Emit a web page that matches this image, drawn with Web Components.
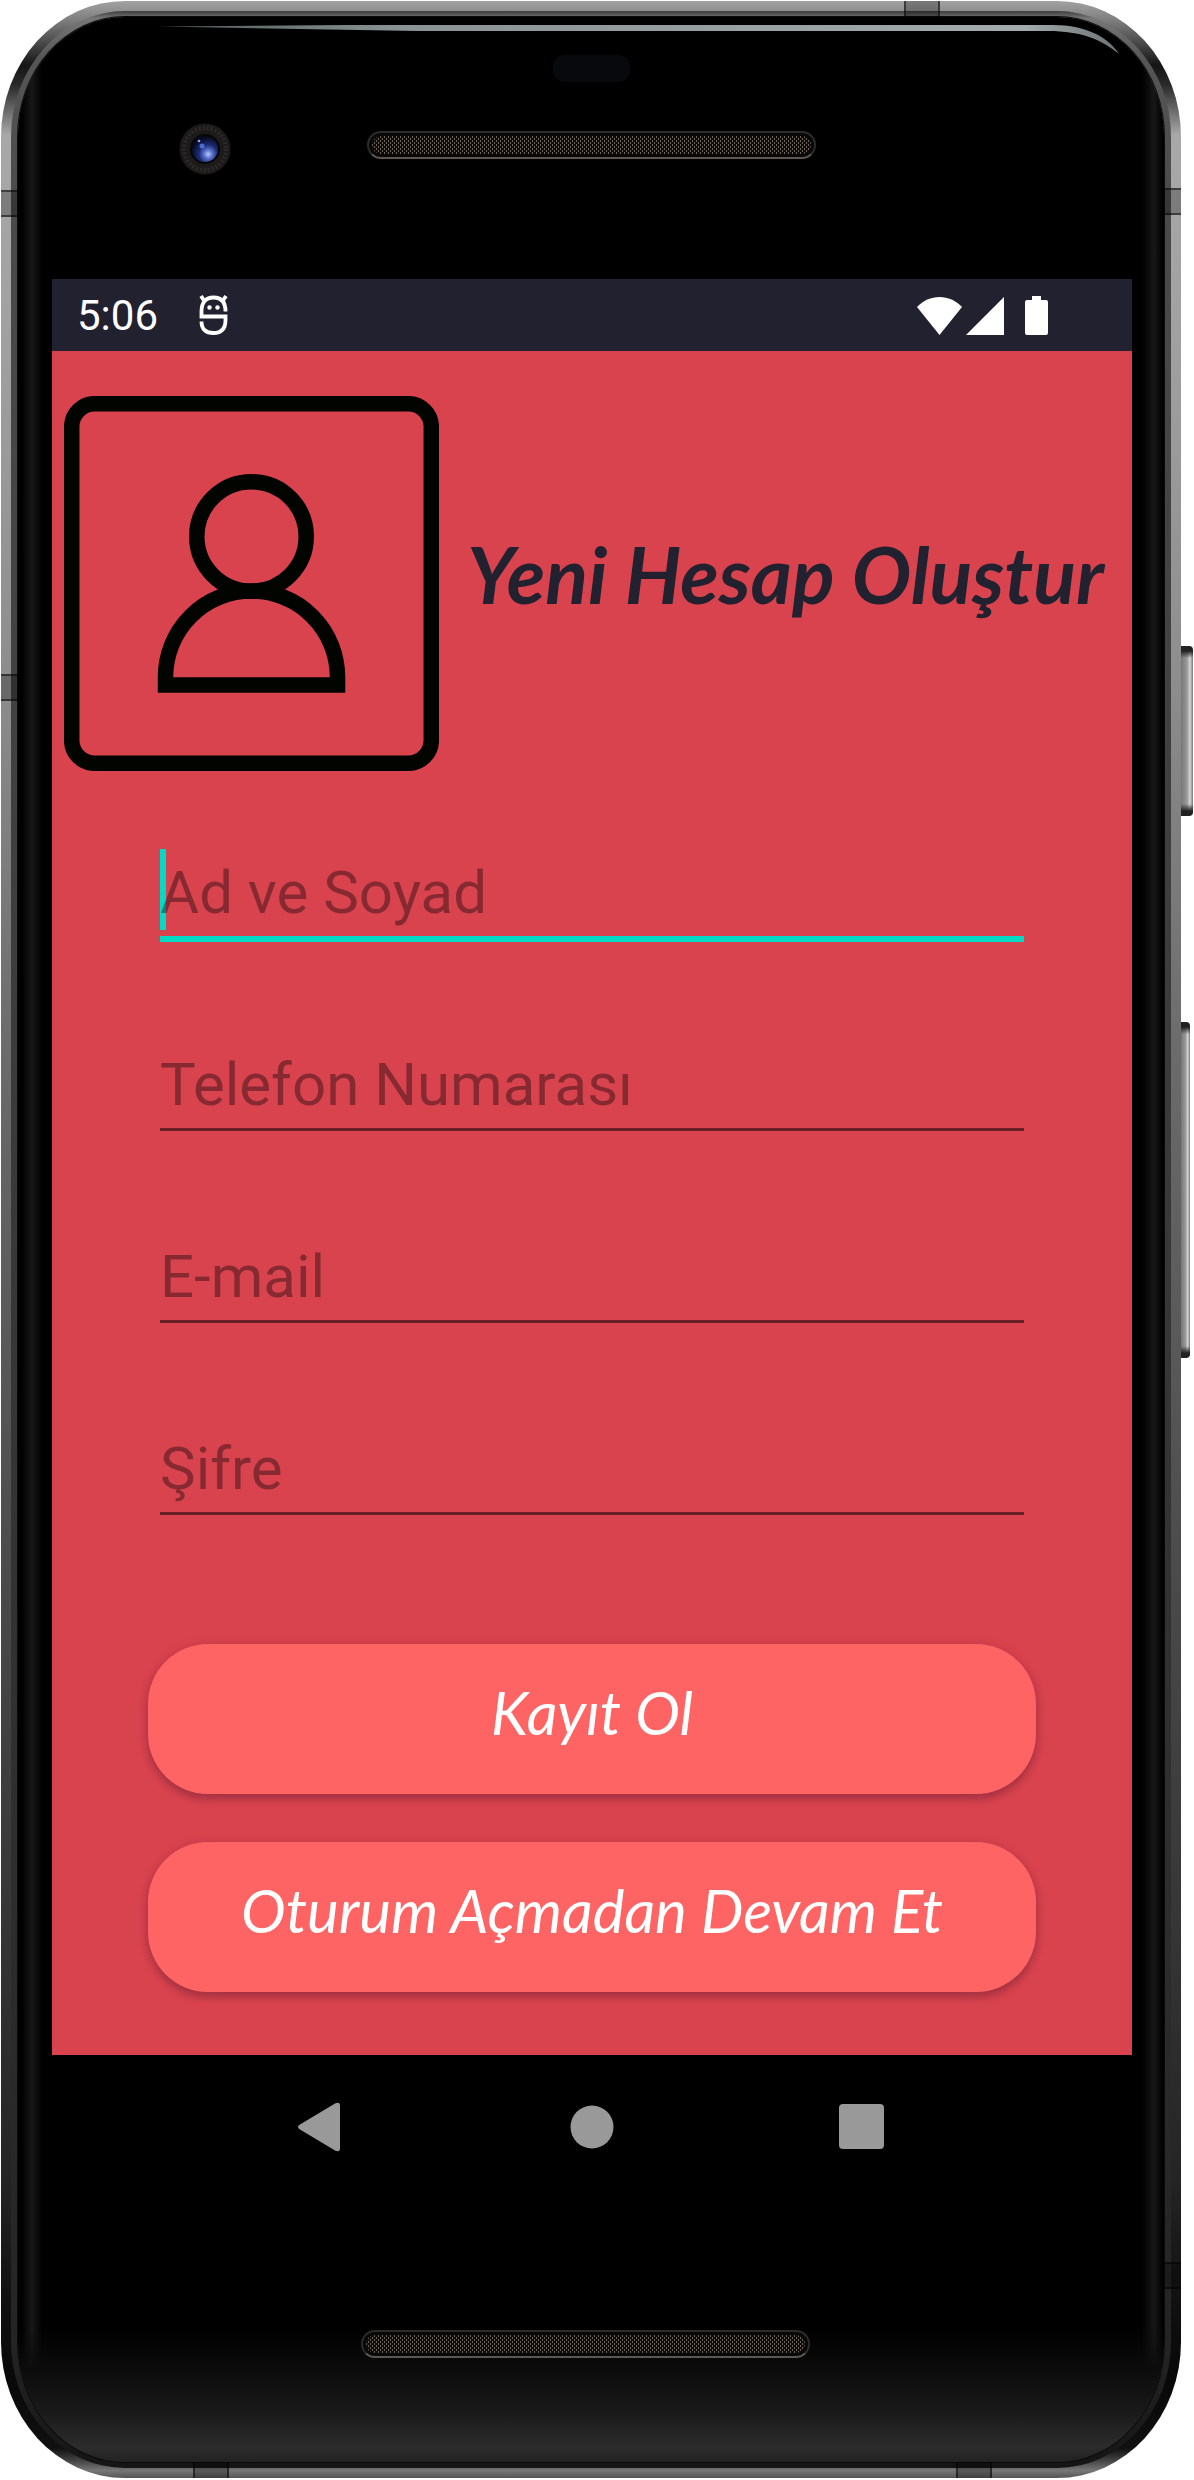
<!DOCTYPE html>
<html lang="tr">
<head>
<meta charset="utf-8">
<meta name="viewport" content="width=device-width, initial-scale=1">
<title>Yeni Hesap Oluştur</title>
<style>
  body { margin: 0; background: #fff; font-family: Roboto, sans-serif; }
</style>
</head>
<body>
<device-frame>
  <status-bar time="5:06"></status-bar>
  <sign-up-page heading="Yeni Hesap Oluştur">
    <text-field name="fullname" label="Ad ve Soyad" active></text-field>
    <text-field name="phone" type="tel" label="Telefon Numarası"></text-field>
    <text-field name="email" type="email" label="E-mail"></text-field>
    <text-field name="password" type="password" label="Şifre"></text-field>
    <pill-button slot="actions">Kayıt Ol</pill-button>
    <pill-button slot="actions">Oturum Açmadan Devam Et</pill-button>
  </sign-up-page>
  <nav-bar></nav-bar>
</device-frame>

<script>
const define = (name, render) => customElements.define(name, class extends HTMLElement {
  connectedCallback() {
    if (this.shadowRoot) return;
    this.attachShadow({ mode: 'open' }).innerHTML = render(this);
  }
});

define('speaker-grille', () => `
  <style>
    :host { display: block; box-sizing: border-box; width: 449px; height: 28px; border-radius: 14px;
      border: 2px solid #2b2b2b; border-bottom-color: #5c5752; padding: 3px; background: #080808; }
    svg { display: block; width: 100%; height: 100%; border-radius: 9px; }
  </style>
  <svg aria-hidden="true">
    <defs><pattern id="mesh" width="4" height="4" patternUnits="userSpaceOnUse">
      <rect width="4" height="4" fill="#0d0c0b"/>
      <path d="M0 0h1v2H0zM2 2h1v2H2z" fill="#6b655c"/>
    </pattern></defs>
    <rect width="100%" height="100%" fill="url(#mesh)"/>
  </svg>`);

define('front-camera', () => `
  <style>:host { display: block; width: 52px; height: 52px; } svg { display: block; }</style>
  <svg width="52" height="52" viewBox="0 0 52 52" aria-hidden="true">
    <defs>
      <radialGradient id="lens" cx="62%" cy="70%" r="65%">
        <stop offset="0" stop-color="#b9c8f8"/><stop offset=".25" stop-color="#5a74cc"/>
        <stop offset=".55" stop-color="#1c2c74"/><stop offset="1" stop-color="#060a20"/>
      </radialGradient>
    </defs>
    <circle cx="26" cy="26" r="25.5" fill="#1d1a1a"/>
    <circle cx="26" cy="26" r="21" fill="none" stroke="#2c2929" stroke-width="4" stroke-dasharray="2 2"/>
    <circle cx="26" cy="26" r="15" fill="#060608"/>
    <circle cx="26" cy="26" r="13" fill="url(#lens)"/>
    <circle cx="23" cy="23" r="2.5" fill="#4d6bd0"/>
    <circle cx="20" cy="18" r="1.3" fill="#93a8ee"/>
  </svg>`);

define('device-frame', () => `
  <style>
    :host { display: block; position: relative; padding: 1px 13px 1px 1px; }
    .rim { position: relative; padding: 10px; border-radius: 124px / 136px; overflow: hidden;
      background: linear-gradient(#a2a2a2 0, #7d7d7d .8%, #151515 2.6%, #2a2a2a 3.4%, #a8a8a8 5.4%, #a0a0a0 14%,
        #8c8c8c 28%, #6c6c6c 42%, #505050 60%, #353535 78%, #242424 88%, #101010 93%, #080808 96%, #101010 98.8%, #444 99.3%, #777 99.7%, #555 100%); }
    .lip { padding: 6px 7px; border-radius: 114px / 126px;
      background: linear-gradient(#3d3d3d, #777 .3%, #555 2%, #4a4a4a 8%, #3c3c3c 40%, #2c2c2c 80%, #242424 95%, #151515); }
    .glass { position: relative; border-radius: 107px / 120px; overflow: hidden; box-shadow: 0 0 0 1px #0a0a0a;
      background:
        linear-gradient(transparent 94.5%, #0c0c0c 96.3%, #1a1a1a 98%, #2c2c2c 99.4%, #222 100%),
        linear-gradient(90deg, #000 4px, #171717 14px, #000 24px, #000 calc(100% - 22px), #171717 calc(100% - 10px), #000 calc(100% - 1px)); }
    .gleam { position: absolute; left: 0; top: 0; width: 100%; height: 60px; }
    .top { height: 262px; display: flex; flex-direction: column; align-items: center; }
    .sensor { width: 77px; height: 27px; border-radius: 12px; background: #08090d; margin: 38px 0 41px; }
    .row { width: 100%; display: grid; grid-template-columns: 1fr auto 1fr; align-items: center; }
    .row speaker-grille { margin-bottom: 8px; }
    front-camera { justify-self: center; padding-left: 26px; }
    .screen { margin: 0 32px 0 34px; }
    .bottom { height: 263px; box-sizing: border-box; display: flex; justify-content: center; padding: 131px 12px 0 0; }
    .band { position: absolute; background: rgb(0 0 0 / .25); border: 0 solid rgb(0 0 0 / .5); }
    .side { width: 17px; height: 23px; border-width: 2px 0; }
    .cap { width: 32px; height: 16px; border-width: 0 2px; }
    .l { left: 0 } .r { right: 0 } .t { top: 0 } .b { bottom: 0 }
    .key { position: absolute; right: 1px; width: 12px; border-radius: 0 4px 4px 0;
      background: linear-gradient(#222 0, #222 5px, transparent 12px, transparent calc(100% - 12px), #222 calc(100% - 5px)),
        linear-gradient(90deg, #777, #999 50%, #d5d8d6 75%, #777); }
    .power { top: 646px; height: 170px; }
    .volume { top: 1022px; height: 336px; right: 4px; width: 9px; }
  </style>
  <i class="key power"></i><i class="key volume"></i>
  <div class="rim">
    <div class="lip"><div class="glass">
      <svg class="gleam" viewBox="0 0 1146 60" preserveAspectRatio="none" aria-hidden="true">
        <defs><linearGradient id="g"><stop offset="0" stop-color="#4e5656"/><stop offset=".25" stop-color="#8a9394"/><stop offset=".9" stop-color="#a3abad"/><stop offset="1" stop-color="#6c7374"/></linearGradient></defs>
        <path d="M140 9.500L330 8H1035C1069 8 1091 21 1101 37C1084 23 1064 14 1030 14H400Z" fill="url(#g)"/>
      </svg>
      <div class="top">
        <div class="sensor"></div>
        <div class="row"><front-camera></front-camera><speaker-grille></speaker-grille></div>
      </div>
      <div class="screen"><slot></slot></div>
      <div class="bottom"><speaker-grille></speaker-grille></div>
    </div></div>
    <i class="band side l" style="top:189px"></i><i class="band side l" style="top:673px"></i>
    <i class="band side r" style="top:187px"></i><i class="band side r" style="top:2261px"></i>
    <i class="band cap t" style="left:903px"></i>
    <i class="band cap b" style="left:192px"></i><i class="band cap b" style="left:955px"></i>
  </div>`);

define('status-bar', el => `
  <style>
    :host { display: flex; align-items: center; justify-content: space-between; height: 72px; box-sizing: border-box;
      padding: 2px 84px 0 25px; background: #22212f; color: #fff; font-size: 42px; line-height: 48px; }
    div { display: flex; align-items: center; }
    .left { gap: 38px; }
    svg { display: block; }
  </style>
  <div class="left">
    <time>${el.getAttribute('time')}</time>
    <svg width="34" height="46" viewBox="0 0 34 46" fill="none" stroke="#fff" stroke-width="3.800" aria-hidden="true">
      <path d="M29.500 18.500C29.500 9 25 4.500 17.500 4.500S5.500 9 5.500 18.500V23.500H29.500V27C29.500 36 25 40 17.500 40S5.500 36.500 5.500 28.500"/>
      <path d="M5 3L9 9M30 3L26 9"/>
      <g fill="#fff" stroke="none"><circle cx="13.500" cy="14.500" r="2.200"/><circle cx="21.500" cy="14.500" r="2.200"/></g>
    </svg>
  </div>
  <div>
    <svg width="132" height="40" viewBox="0 0 132 40" fill="#fff" aria-hidden="true">
      <path d="M1 11C13-2.500 34-2.500 46 11L23.500 39Z"/>
      <path d="M88 1V39H50Z"/>
      <path d="M116 0h9v4h5a2 2 0 0 1 2 2v31a2 2 0 0 1-2 2h-19a2 2 0 0 1-2-2V6a2 2 0 0 1 2-2h5z"/>
    </svg>
  </div>`);

define('profile-badge', () => `
  <style>:host { display: block; flex: none; width: 375px; } svg { display: block; width: 100%; }</style>
  <svg viewBox="0 0 375 375" fill="none" stroke="#020400" stroke-width="15.500" aria-hidden="true">
    <rect x="7.700" y="7.700" width="359.600" height="359.600" rx="23"/>
    <circle cx="187.500" cy="140.500" r="54.700"/>
    <path d="M101.500 289V281a86 86 0 0 1 172 0v8z"/>
  </svg>`);

define('sign-up-page', el => `
  <style>
    :host { display: block; background: #d9434e; padding: 45px 0 63px; }
    header { display: flex; align-items: center; gap: 28px; padding-left: 12px; }
    h1 { margin: 0; padding-bottom: 20px; white-space: nowrap; color: #22212f;
      font: italic 700 79px/92px Lato, sans-serif; }
    form { margin: 0; }
    .fields { display: grid; gap: 99px; padding: 78px 108px 126px; }
    .actions { display: grid; gap: 48px; padding: 0 96px; }
  </style>
  <header><profile-badge></profile-badge><h1>${el.getAttribute('heading')}</h1></header>
  <form>
    <div class="fields"><slot></slot></div>
    <div class="actions"><slot name="actions"></slot></div>
  </form>`);

define('text-field', el => {
  const label = el.getAttribute('label');
  return `
  <style>
    :host { display: block; position: relative; height: 93px; }
    input { position: relative; display: block; box-sizing: border-box; width: 100%; height: 87px; margin: 0; padding: 0;
      border: 0; outline: 0; background: none; font: 400 60px/72px Roboto, sans-serif; color: #22212f; }
    input::placeholder { color: rgb(0 0 0 / .38); opacity: 1; }
    .line { height: 3px; background: #681f26; }
    .caret { display: none; position: absolute; left: 0; top: 0; width: 6px; height: 81px; background: #03dac5; }
    :host([active]) .line { height: 6px; background: #03dac5; }
    :host([active]) .caret { display: block; }
  </style>
  <i class="caret"></i>
  <input type="${el.getAttribute('type') || 'text'}" name="${el.getAttribute('name')}" placeholder="${label}" aria-label="${label}">
  <div class="line"></div>`;
});

define('pill-button', () => `
  <style>
    :host { display: block; }
    button { display: block; box-sizing: border-box; width: 100%; height: 150px; margin: 0; padding: 0 0 14px; border: 0;
      border-radius: 60px; background: #ff6464; color: #fff; font: italic 400 60px/72px Lato, sans-serif;
      box-shadow: 0 5px 9px rgb(60 20 40 / .32), 0 0 12px rgb(60 20 40 / .08); }
  </style>
  <button type="button"><slot></slot></button>`);

define('nav-bar', () => `
  <style>
    :host { display: flex; align-items: center; justify-content: center; gap: 200px; height: 144px; background: #000; }
    button { width: 72px; height: 72px; padding: 0; border: 0; background: none; }
    svg { display: block; }
  </style>
  <button type="button" aria-label="Geri"><svg width="72" height="72" viewBox="0 0 72 72" fill="#999"><path d="M16 33.500L51 12.500Q56 10 56 15V57Q56 62 51 59.500L16 38.500Q12 36 16 33.500Z"/></svg></button>
  <button type="button" aria-label="Ana ekran"><svg width="72" height="72" viewBox="0 0 72 72" fill="#999"><circle cx="36" cy="36" r="21.500"/></svg></button>
  <button type="button" aria-label="Son uygulamalar"><svg width="72" height="72" viewBox="0 0 72 72" fill="#999"><rect x="11" y="13" width="45" height="45" rx="4"/></svg></button>`);
</script>
</body>
</html>
